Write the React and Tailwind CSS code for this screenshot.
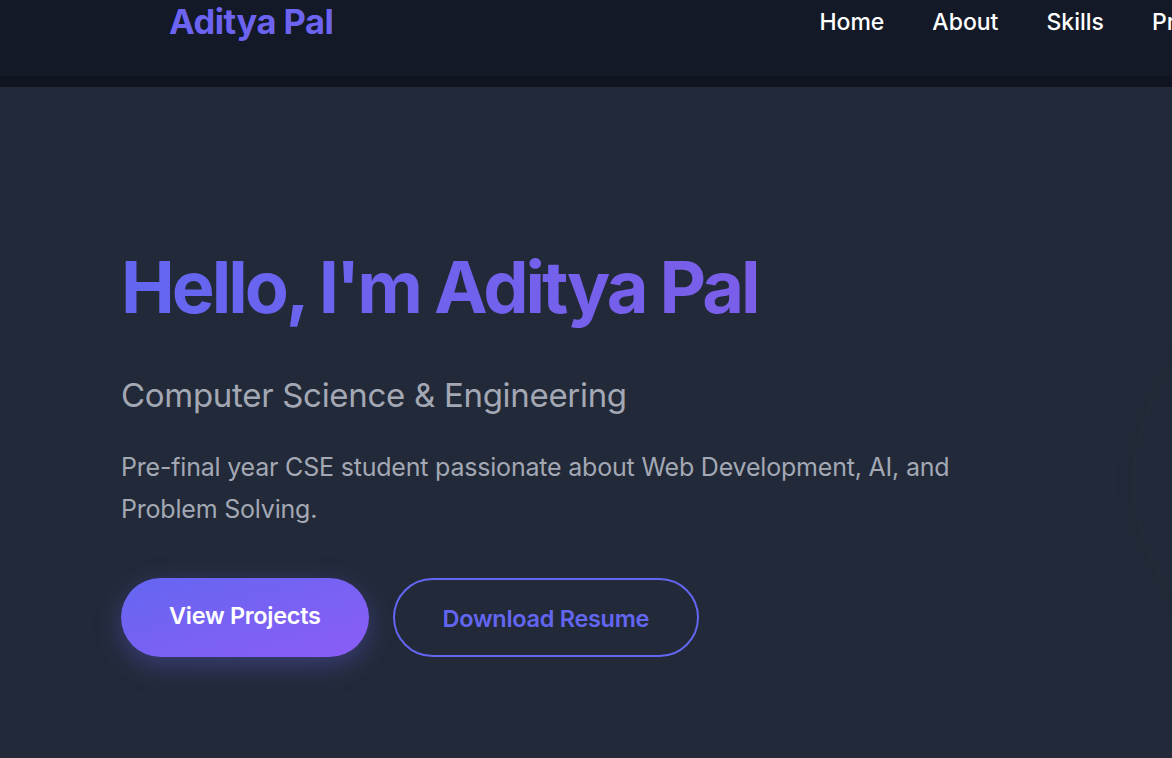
import React from 'react';

const navLinks = ['Home', 'About', 'Skills', 'Projects', 'Contact'];

const Header = () => {
  return (
    <header className="h-[87px] bg-[#131927] border-b-[11px] border-[#0f1420] overflow-hidden">
      <div className="flex items-start whitespace-nowrap pt-[1px]">
        {/* Logo */}
        <div className="ml-[169px] text-[34.5px] leading-[42px] font-bold tracking-[-0.5px] text-[#6c63f0]">
          Aditya Pal
        </div>

        {/* Links */}
        <nav className="ml-[486px] flex gap-12 pt-[5px] shrink-0">
          {navLinks.map((link) => (
            <a key={link} href={`#${link.toLowerCase()}`} className="text-[23px] leading-[32px] font-medium text-white">
              {link}
            </a>
          ))}
        </nav>
      </div>
    </header>
  );
};

const Hero = () => {
  return (
    <section className="flex items-start pl-[121px] pt-[164px] pb-[100px]">
      <div className="w-[870px] shrink-0">
        <h1 className="text-[72px] leading-none font-bold tracking-[-3px] text-transparent bg-clip-text bg-gradient-to-r from-[#6366f1] to-[#7b5ee9] w-fit pr-1 pb-2">
          Hello, I'm Aditya Pal
        </h1>

        <h2 className="mt-[46px] text-[33px] leading-[36px] font-normal tracking-[-0.3px] text-[#a3a8b4]">
          Computer Science &amp; Engineering
        </h2>

        <p className="mt-[33px] text-[25px] leading-[42px] tracking-[-0.2px] text-[#a3a8b4]">
          Pre-final year CSE student passionate about Web Development, AI, and Problem Solving.
        </p>

        {/* Buttons */}
        <div className="mt-[48px] flex gap-6">
          <button className="h-[79px] px-12 pb-[3px] rounded-full bg-gradient-to-br from-[#6366f1] to-[#8b5cf6] text-white text-[23.5px] font-semibold tracking-[-0.3px] shadow-[0_8px_28px_rgba(99,102,241,0.35)]">
            View Projects
          </button>
          <button className="h-[79px] px-12 pt-[2px] rounded-full border-2 border-[#6366f1] text-[#6366f1] text-[23.5px] font-semibold tracking-[-0.3px]">
            Download Resume
          </button>
        </div>
      </div>

      {/* Profile picture, mostly off screen */}
      <div className="ml-[142px] mt-[50px] w-[360px] h-[360px] shrink-0 rounded-full border border-white/[0.015] shadow-[0_0_24px_rgba(0,0,0,0.06)]" />
    </section>
  );
};

export default function App() {
  return (
    <div className="min-h-[758px] bg-[#222938] overflow-hidden" style={{ fontFamily: 'Inter, "Noto Sans", sans-serif' }}>
      <Header />
      <Hero />
    </div>
  );
}
